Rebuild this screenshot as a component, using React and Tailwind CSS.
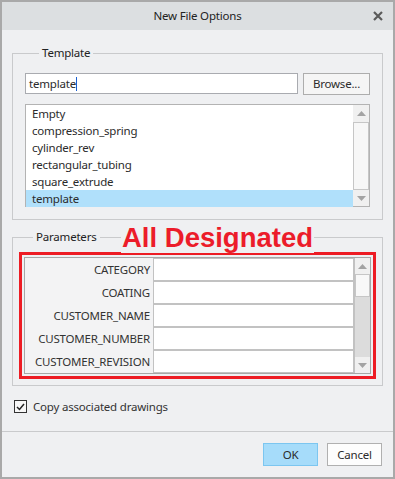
import React from 'react';

const templates = ['Empty', 'compression_spring', 'cylinder_rev', 'rectangular_tubing', 'square_extrude', 'template'];
const params = ['CATEGORY', 'COATING', 'CUSTOMER_NAME', 'CUSTOMER_NUMBER', 'CUSTOMER_REVISION'];

function ArrowUp() {
  return (
    <svg width="9" height="5" viewBox="0 0 9 5">
      <path d="M0 5 L4.5 0 L9 5 Z" fill="#a3a3a3" />
    </svg>
  );
}

function ArrowDown() {
  return (
    <svg width="9" height="5" viewBox="0 0 9 5">
      <path d="M0 0 L4.5 5 L9 0 Z" fill="#a3a3a3" />
    </svg>
  );
}

function App() {
  return (
    <div
      className="w-[395px] h-[479px] border-2 border-[#a9a9a9] bg-[#eff0f2] flex flex-col text-[11.5px] tracking-[-0.2px] text-[#2b2b2b] overflow-hidden"
      style={{ fontFamily: '"Noto Sans", "Open Sans", sans-serif' }}
    >
      {/* title bar */}
      <div className="h-[28px] shrink-0 bg-[#dcdfe1] relative flex items-center justify-center">
        <span className="text-[#222]">New File Options</span>
        <svg className="absolute right-[10px] top-[9px]" width="10" height="10" viewBox="0 0 10 10">
          <path d="M1 1 L9 9 M9 1 L1 9" stroke="#5a5a5a" strokeWidth="2.2" />
        </svg>
      </div>

      {/* template group */}
      <fieldset className="mt-[15px] mx-[10px] border border-[#c9cacc] px-[12px] pt-[12px] pb-[12px]">
        <legend className="ml-[14px] px-[3px] leading-[16px] text-[#222]">Template</legend>
        <div className="flex gap-[5px] h-[22px]">
          <div className="flex-1 h-[21px] bg-white border border-[#a9abb0] flex items-center pl-[3px]">
            <span>template</span>
            <span className="w-[1px] h-[14px] bg-[#1a5fd0]" />
          </div>
          <button className="w-[67px] h-[22px] bg-[#f5f5f5] border border-[#adadad] text-[#2b2b2b]">Browse...</button>
        </div>
        <div className="mt-[9px] h-[103px] bg-white border border-[#b3b3b3] flex">
          <div className="flex-1 flex flex-col">
            {templates.map((t, i) => (
              <div
                key={t}
                className={`h-[17px] leading-[17px] pl-[6px] ${i === templates.length - 1 ? 'bg-[#b0e0fb]' : ''}`}
              >
                {t}
              </div>
            ))}
          </div>
          <div className="w-[16px] flex flex-col bg-[#f0f0f0]">
            <div className="h-[17px] flex items-center justify-center">
              <ArrowUp />
            </div>
            <div className="flex-1 bg-[#f7f7f7] border border-[#c6c6c6]" />
            <div className="h-[16px] flex items-center justify-center">
              <ArrowDown />
            </div>
          </div>
        </div>
      </fieldset>

      {/* parameters group */}
      <fieldset className="relative mt-[9px] mx-[10px] border border-[#c9cacc] px-[6px] pt-[7px] pb-[6px]">
        <legend className="ml-[14px] px-[3px] leading-[16px] text-[#222]">Parameters</legend>
        <div
          className="absolute left-[108px] top-[-23px] px-[1px] bg-[#eff0f2] text-[#ec1c2a] text-[27.5px] tracking-normal font-bold leading-[31px]"
          style={{ fontFamily: '"Liberation Sans", Arial, sans-serif' }}
        >
          All Designated
        </div>
        <div className="border-[3px] border-[#ed1c24] p-[2px]">
          <div className="border border-[#a7a7a7] bg-[#f3f3f4] flex">
            <div className="flex-1 flex flex-col">
              {params.map((p) => (
                <div key={p} className="h-[23px] flex">
                  <div className="w-[128px] text-right pr-[3px] leading-[23px] text-[#333]">{p}</div>
                  <div className="flex-1 bg-white border border-[#c2c2c2]" />
                </div>
              ))}
            </div>
            <div className="w-[16px] flex flex-col bg-[#dcdcdc] border-l border-[#c2c2c2]">
              <div className="h-[16px] bg-[#f0f0f0] flex items-center justify-center">
                <ArrowUp />
              </div>
              <div className="h-[23px] bg-[#f8f8f8] border border-[#c6c6c6]" />
              <div className="flex-1" />
              <div className="h-[16px] bg-[#f0f0f0] flex items-center justify-center">
                <ArrowDown />
              </div>
            </div>
          </div>
        </div>
      </fieldset>

      {/* checkbox */}
      <div className="mt-[14px] ml-[12px] flex items-center h-[13px]">
        <div className="w-[13px] h-[13px] border border-[#333] bg-[#f7f7f7] flex items-center justify-center">
          <svg width="9" height="8" viewBox="0 0 9 8">
            <path d="M1 4 L3.5 6.5 L8 1" stroke="#222" strokeWidth="1.5" fill="none" />
          </svg>
        </div>
        <span className="ml-[6px] text-[#333]">Copy associated drawings</span>
      </div>

      <div className="mt-[18px] h-[1px] bg-[#c9cacc]" />

      {/* buttons */}
      <div className="mt-[11px] flex justify-end gap-[9px] pr-[11px]">
        <button className="w-[55px] h-[23px] bg-[#a6dcfa] border border-[#7cc6f0] text-[#2b2b2b]">OK</button>
        <button className="w-[55px] h-[23px] bg-[#fdfdfd] border border-[#b0b0b0] text-[#2b2b2b]">Cancel</button>
      </div>
    </div>
  );
}

export default App;
